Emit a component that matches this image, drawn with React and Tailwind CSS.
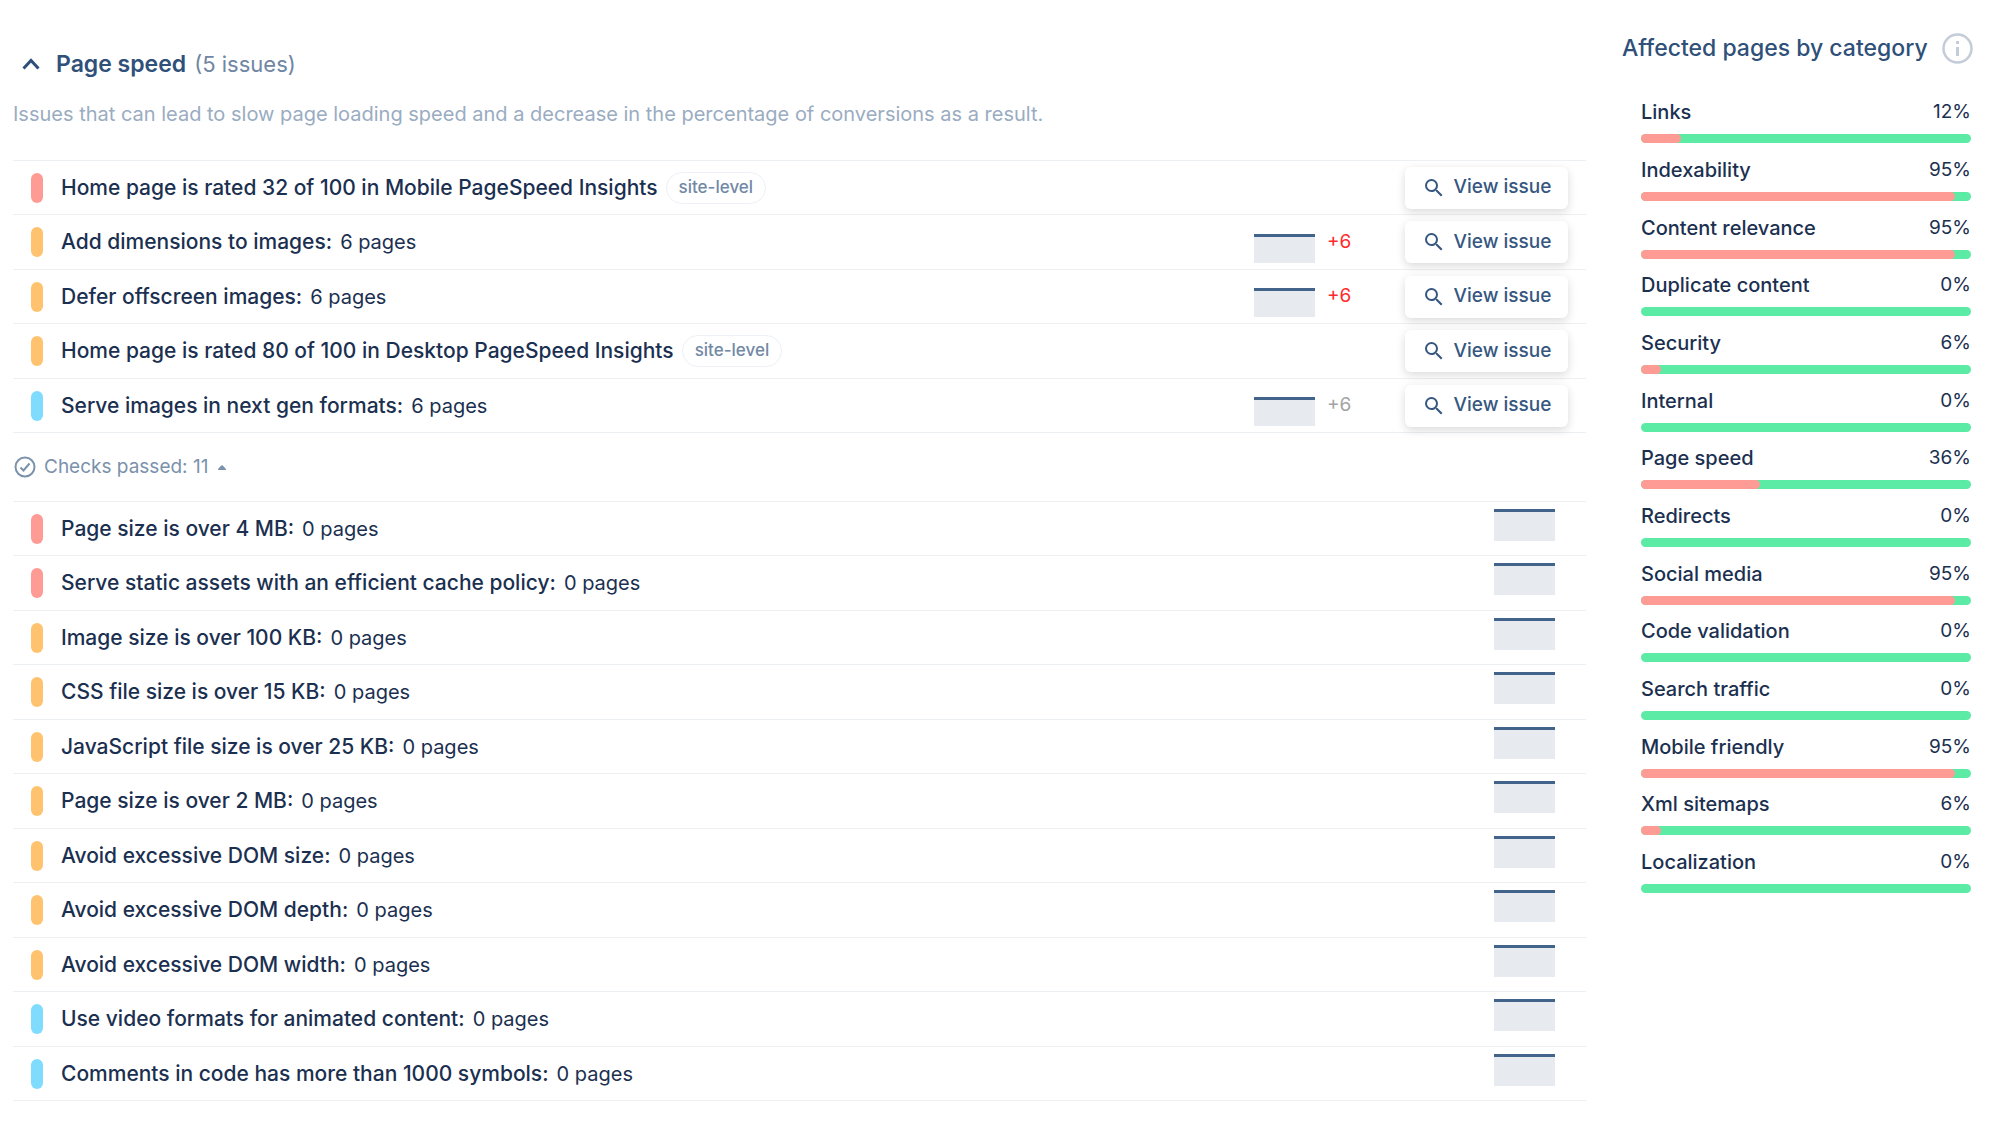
import { MdSearch } from "react-icons/md";

const issues = [
  { level: "error", title: "Home page is rated 32 of 100 in Mobile PageSpeed Insights", siteLevel: true },
  { level: "warning", title: "Add dimensions to images:", pages: 6, diff: "+6", diffColor: "text-[#ff2a2a]" },
  { level: "warning", title: "Defer offscreen images:", pages: 6, diff: "+6", diffColor: "text-[#ff2a2a]" },
  { level: "warning", title: "Home page is rated 80 of 100 in Desktop PageSpeed Insights", siteLevel: true },
  { level: "notice", title: "Serve images in next gen formats:", pages: 6, diff: "+6", diffColor: "text-[#a3a3a3]" },
];

const passedChecks = [
  { level: "error", title: "Page size is over 4 MB:" },
  { level: "error", title: "Serve static assets with an efficient cache policy:" },
  { level: "warning", title: "Image size is over 100 KB:" },
  { level: "warning", title: "CSS file size is over 15 KB:" },
  { level: "warning", title: "JavaScript file size is over 25 KB:" },
  { level: "warning", title: "Page size is over 2 MB:" },
  { level: "warning", title: "Avoid excessive DOM size:" },
  { level: "warning", title: "Avoid excessive DOM depth:" },
  { level: "warning", title: "Avoid excessive DOM width:" },
  { level: "notice", title: "Use video formats for animated content:" },
  { level: "notice", title: "Comments in code has more than 1000 symbols:" },
];

const categories = [
  { name: "Links", value: 12 },
  { name: "Indexability", value: 95 },
  { name: "Content relevance", value: 95 },
  { name: "Duplicate content", value: 0 },
  { name: "Security", value: 6 },
  { name: "Internal", value: 0 },
  { name: "Page speed", value: 36 },
  { name: "Redirects", value: 0 },
  { name: "Social media", value: 95 },
  { name: "Code validation", value: 0 },
  { name: "Search traffic", value: 0 },
  { name: "Mobile friendly", value: 95 },
  { name: "Xml sitemaps", value: 6 },
  { name: "Localization", value: 0 },
];

const levelColors = {
  error: "bg-[#ff9b95]",
  warning: "bg-[#ffc370]",
  notice: "bg-[#80dcff]",
};

function IssueTitle({ level, title, pages }) {
  return (
    <>
      <span className={`mr-[18px] h-[30px] w-3 shrink-0 rounded-full ${levelColors[level]}`} />
      <span className="text-[21px] font-medium">{title}</span>
      {pages !== undefined && <span className="ml-2 text-xl">{pages} pages</span>}
    </>
  );
}

function IssueRow({ issue }) {
  return (
    <li className="flex h-[54px] items-center border-b border-[#edf0f2] px-[18px] even:h-[55px]">
      <IssueTitle level={issue.level} title={issue.title} pages={issue.pages} />
      {issue.siteLevel && (
        <span className="ml-2 flex h-8 items-center rounded-full border border-[#edf0f4] px-3 text-[17px] font-medium text-[#7289a5]">
          site-level
        </span>
      )}
      <div className="ml-auto flex items-center">
        {issue.diff && (
          <>
            <span className="mt-3 h-[29px] w-[61px] border-t-3 border-[#43648a] bg-[#e7ebef]" />
            <span className={`ml-3 w-[78px] text-[19px] ${issue.diffColor}`}>{issue.diff}</span>
          </>
        )}
        <button className="flex h-[42px] w-[163px] items-center justify-center gap-2 rounded-md bg-white text-[19px] font-medium text-[#36577f] shadow-[0_3px_10px_rgba(0,0,0,0.15)]">
          <MdSearch className="size-6" />
          View issue
        </button>
      </div>
    </li>
  );
}

function PassedRow({ check }) {
  return (
    <li className="flex h-[54px] items-center border-b border-[#edf0f2] pr-[31px] pl-[18px] even:h-[55px]">
      <IssueTitle level={check.level} title={check.title} pages={0} />
      <span className="mb-2 ml-auto h-8 w-[61px] border-t-3 border-[#43648a] bg-[#e7ebef]" />
    </li>
  );
}

function Category({ name, value }) {
  return (
    <li className="h-[58px] nth-[3n]:h-[57px]">
      <div className="flex h-9 items-start justify-between leading-7">
        <span className="font-medium">{name}</span>
        <span className="text-[19px] leading-7">{value}%</span>
      </div>
      <div
        role="progressbar"
        aria-label={name}
        aria-valuenow={value}
        className="h-[9px] overflow-hidden rounded-full bg-[#5ceba5]"
      >
        <div className="h-full rounded-r-full bg-[#ff9b95]" style={{ width: `${value}%` }} />
      </div>
    </li>
  );
}

export default function App() {
  return (
    <div className="flex min-h-screen items-start bg-white pr-[26px] pl-[13px] font-['Inter',sans-serif] text-xl text-[#1b3050]">
      <main className="min-w-0 flex-1">
        <h2 className="mt-12">
          <button className="flex h-8 items-center pl-[9px] text-[22px] text-[#7086a3]">
            <svg className="mr-4 h-3 w-[18px]" viewBox="0 0 18 12" fill="none" stroke="#2f5079" strokeWidth="3">
              <path d="M1.5 10.5 9 2.5l7.5 8" />
            </svg>
            <span className="mr-2 text-[23px] font-semibold text-[#2f5079]">Page speed</span>
            (5 issues)
          </button>
        </h2>
        <p className="mt-5 leading-7 text-[#9aacc1]">
          Issues that can lead to slow page loading speed and a decrease in the percentage of conversions as a result.
        </p>
        <ul className="mt-8 border-t border-[#edf0f2]">
          {issues.map((issue) => (
            <IssueRow key={issue.title} issue={issue} />
          ))}
        </ul>
        <button className="flex h-[68px] items-center text-[19px] text-[#7b91ac]">
          <svg className="mr-2 ml-px size-[22px]" viewBox="0 0 22 22" fill="none" stroke="currentColor" strokeWidth="2">
            <circle cx="11" cy="11" r="9.5" />
            <path d="m6.5 11.5 3 3 6-7" />
          </svg>
          Checks passed: 11
          <svg className="ml-[10px] h-[5px] w-2" viewBox="0 0 8 5" fill="currentColor">
            <path d="M0 4.5Q0 4 .5 3.500L3.300.5Q4 0 4.700.5L7.500 3.500Q8 4 8 4.500V5H0z" />
          </svg>
        </button>
        <ul className="border-t border-[#edf0f2]">
          {passedChecks.map((check) => (
            <PassedRow key={check.title} check={check} />
          ))}
        </ul>
      </main>

      <aside className="ml-9 w-[351px] shrink-0">
        <h2 className="mt-8 flex h-8 items-center justify-between text-[23px] font-medium whitespace-nowrap text-[#2f5079]">
          Affected pages by category
          <svg className="size-[31px] shrink-0" viewBox="0 0 31 31" fill="none" stroke="#c3ccd9" strokeWidth="2.5">
            <circle cx="15.5" cy="15.5" r="14" />
            <path d="M15.5 14v9M15.5 8v3" strokeWidth="3" />
          </svg>
        </h2>
        <ul className="mt-[34px] pr-0.5 pl-[19px]">
          {categories.map((category) => (
            <Category key={category.name} name={category.name} value={category.value} />
          ))}
        </ul>
      </aside>
    </div>
  );
}
